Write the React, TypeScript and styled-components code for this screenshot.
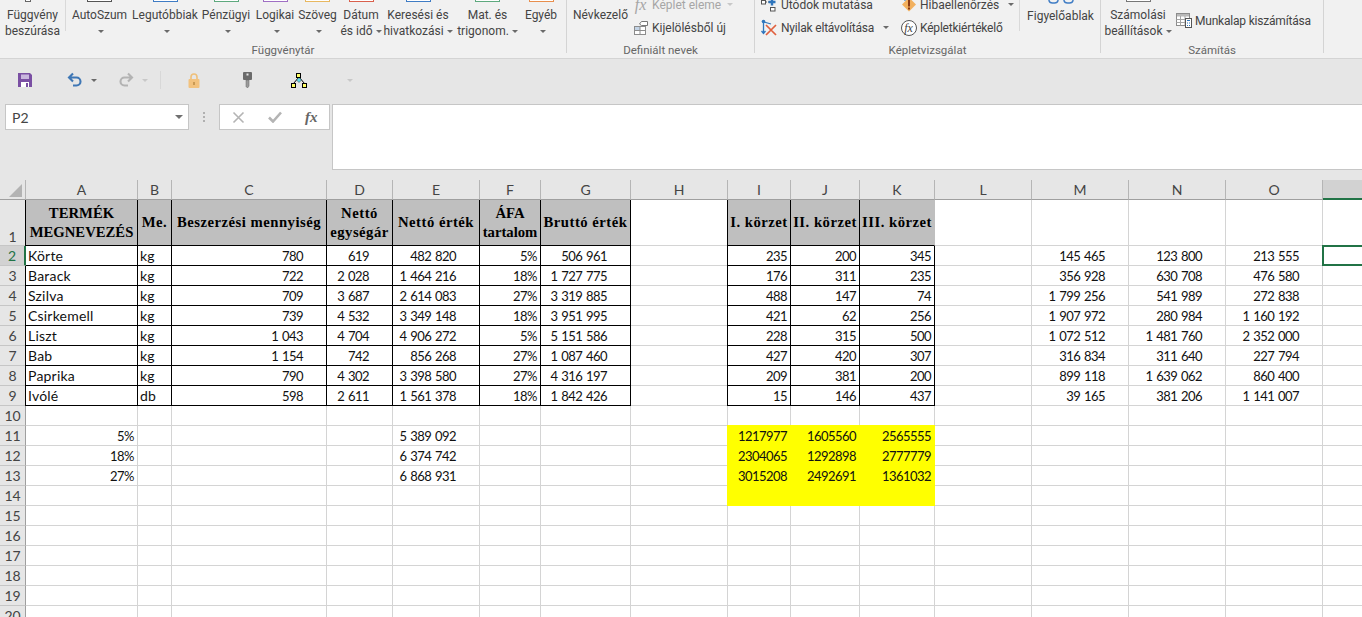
import React from "react";
import styled, { createGlobalStyle } from "styled-components";

const GlobalStyle = createGlobalStyle`
    html, body {
        margin: 0;
        padding: 0;
        width: 1362px;
        height: 617px;
        overflow: hidden;
        background: #e6e6e6;
    }
    * {
        box-sizing: border-box;
    }
`;

const Page = styled.div`
    width: 1362px;
    height: 617px;
    overflow: hidden;
    font-family: Roboto, "Liberation Sans", sans-serif;
    color: #444;
`;

/* ribbon */

const Ribbon = styled.div`
    display: flex;
    height: 59px;
    background: #f1f1f1;
    border-bottom: 1px solid #d4d4d4;
    font-size: 12px;
    overflow: hidden;
`;

const Group = styled.div<{ $width: number }>`
    display: flex;
    flex-direction: column;
    width: ${(p) => p.$width}px;
    height: 53px;
    border-right: 1px solid #d4d4d4;
`;

const GroupBody = styled.div`
    display: flex;
    align-items: flex-start;
    height: 42px;
`;

const GroupLabel = styled.div`
    height: 11px;
    line-height: 16px;
    text-align: center;
    font-size: 11.5px;
    color: #666;
`;

const Divider = styled.div`
    flex: none;
    width: 1px;
    height: 31px;
    background: #d9d9d9;
`;

const BigButton = styled.div<{ $width: number }>`
    flex: none;
    display: flex;
    flex-direction: column;
    align-items: center;
    width: ${(p) => p.$width}px;
    white-space: nowrap;
`;

const Strip = styled.div<{ $color?: string; $width?: number; $shift?: number }>`
    width: ${(p) => p.$width ?? 25}px;
    height: 2px;
    margin-right: ${(p) => p.$shift ?? 0}px;
    margin-bottom: 5px;
    background: #fff;
    border: 1px solid ${(p) => p.$color ?? "transparent"};
    border-top: none;
`;

const ButtonLine = styled.div`
    height: 16px;
    line-height: 16px;
`;

const WatchLabel = styled(ButtonLine)`
    margin-top: 4px;
`;

const Caret = styled.span<{ $faint?: boolean; $gap?: number }>`
    display: inline-block;
    width: 0;
    height: 0;
    margin-left: ${(p) => p.$gap ?? 3}px;
    vertical-align: middle;
    border-left: 3px solid transparent;
    border-right: 3px solid transparent;
    border-top: 3px solid ${(p) => (p.$faint ? "#c8c8c8" : "#6a6a6a")};
`;

const SmallStack = styled.div<{ $left: number; $width: number }>`
    flex: none;
    width: ${(p) => p.$width}px;
    margin-left: ${(p) => p.$left}px;
    margin-top: -7px;
`;

const SmallRow = styled.div<{ $disabled?: boolean; $top?: number; $tight?: boolean }>`
    display: flex;
    align-items: center;
    gap: 3px;
    height: 23px;
    white-space: nowrap;
    flex: none;
    margin-top: ${(p) => p.$top ?? 0}px;
    letter-spacing: ${(p) => (p.$tight ? "-0.2px" : "normal")};
    color: ${(p) => (p.$disabled ? "#a6a6a6" : "#444")};
`;

const SmallIcon = styled.span`
    flex: none;
    display: flex;
    align-items: center;
    justify-content: center;
    width: 17px;
    height: 17px;
`;

const FxGlyph = styled.span<{ $size?: number; $color?: string }>`
    font-family: "Liberation Serif", serif;
    font-style: italic;
    font-size: ${(p) => p.$size ?? 15}px;
    line-height: 1;
    color: ${(p) => p.$color ?? "#666"};
`;

const FxBold = styled(FxGlyph)`
    font-weight: bold;
`;

const FxCircle = styled.span`
    display: flex;
    align-items: center;
    justify-content: center;
    width: 16px;
    height: 16px;
    border: 1px solid #555;
    border-radius: 50%;
    background: #fff;
`;

const NameButton = styled.div`
    flex: none;
    width: 59px;
    margin-left: 6px;
    padding-top: 7px;
    line-height: 16px;
    white-space: nowrap;
`;

/* quick access toolbar */

const QuickBar = styled.div`
    display: flex;
    align-items: center;
    height: 45px;
    padding-bottom: 3px;
    background: #e6e6e6;
`;

const QuickItem = styled.div<{ $left: number }>`
    flex: none;
    display: flex;
    align-items: center;
    margin-left: ${(p) => p.$left}px;
`;

const QuickDivider = styled.div`
    width: 1px;
    height: 18px;
    background: #d8d8d8;
`;

/* formula bar */

const FormulaRow = styled.div`
    display: flex;
    align-items: flex-start;
    height: 76px;
    padding-left: 5px;
    background: #e6e6e6;
`;

const NameBox = styled.div`
    display: flex;
    align-items: center;
    justify-content: space-between;
    width: 184px;
    height: 26px;
    padding: 0 5px 0 6px;
    background: #fff;
    border: 1px solid #c6c6c6;
    font-family: Lato, sans-serif;
    font-size: 14px;
`;

const NameCaret = styled.span`
    border-left: 4px solid transparent;
    border-right: 4px solid transparent;
    border-top: 4px solid #707070;
`;

const Grip = styled.div`
    display: flex;
    flex-direction: column;
    align-items: center;
    justify-content: center;
    gap: 2px;
    width: 30px;
    height: 26px;
`;

const GripDot = styled.span`
    width: 2px;
    height: 2px;
    background: #b0b0b0;
`;

const FxBox = styled.div`
    display: flex;
    align-items: center;
    width: 111px;
    height: 26px;
    padding-left: 12px;
    gap: 23px;
    background: #fff;
    border: 1px solid #c6c6c6;
`;

const FormulaInput = styled.div`
    flex: 1;
    height: 66px;
    margin-left: 2px;
    background: #fff;
    border: 1px solid #c6c6c6;
    border-right: none;
`;

/* sheet */

const columnWidths = [26, 112, 34, 155, 66, 87, 61, 90, 97, 63, 69, 75, 97, 97, 97, 97, 97];
const columnLetters = "ABCDEFGHIJKLMNOP".split("");

const Sheet = styled.div`
    display: grid;
    grid-template-columns: ${columnWidths.map((w) => `${w}px`).join(" ")};
    grid-template-rows: 20px 46px repeat(19, 20px);
    background: #fff;
    font-family: Lato, sans-serif;
    font-size: 14px;
    color: #111;
`;

const Corner = styled.div`
    display: flex;
    align-items: flex-end;
    justify-content: flex-end;
    padding: 0 3px 2px 0;
    background: #e6e6e6;
    border-right: 1px solid #b5b5b5;
    border-bottom: 1px solid #9f9f9f;
`;

const ColumnHeader = styled.div<{ $active?: boolean }>`
    display: flex;
    align-items: center;
    justify-content: center;
    background: ${(p) => (p.$active ? "#d2d2d2" : "#e6e6e6")};
    border-right: 1px solid #b5b5b5;
    border-bottom: ${(p) => (p.$active ? "2px solid #217346" : "1px solid #9f9f9f")};
    color: #444;
`;

const RowHeader = styled.div<{ $active?: boolean; $tall?: boolean }>`
    display: flex;
    align-items: ${(p) => (p.$tall ? "flex-end" : "center")};
    justify-content: center;
    background: ${(p) => (p.$active ? "#d2d2d2" : "#e6e6e6")};
    border-right: ${(p) => (p.$active ? "2px solid #217346" : "1px solid #9f9f9f")};
    border-bottom: 1px solid #c6c6c6;
    color: ${(p) => (p.$active ? "#217346" : "#444")};
`;

const Cell = styled.div<{
    $black?: boolean;
    $fill?: string;
    $borderTone?: string;
    $edge?: string;
    $pad?: number;
    $selected?: boolean;
}>`
    position: relative;
    display: flex;
    align-items: center;
    justify-content: ${(p) => (p.$pad !== undefined ? "flex-end" : "flex-start")};
    padding: 0 ${(p) => p.$pad ?? 0}px 0 2px;
    white-space: nowrap;
    background: ${(p) => p.$fill ?? "#fff"};
    border-right: 1px solid ${(p) => p.$borderTone ?? (p.$black ? "#000" : "#d4d4d4")};
    border-bottom: 1px solid ${(p) => (p.$black ? "#000" : p.$borderTone ?? "#d4d4d4")};
    box-shadow: ${(p) => p.$edge ?? "none"};
    ${(p) =>
        p.$pad !== undefined
            ? `font-size: 13px; letter-spacing: -0.54px; word-spacing: 1px;`
            : `letter-spacing: 0.2px;`}

    ${(p) =>
        p.$selected
            ? `&::after {
                content: "";
                position: absolute;
                top: -1px;
                left: -1px;
                right: -1px;
                bottom: -1px;
                border: 2px solid #217346;
            }`
            : ""}
`;

const HeadCell = styled(Cell)`
    justify-content: center;
    padding: 0;
    text-align: center;
    font-family: "Liberation Serif", serif;
    font-weight: bold;
    font-size: 14.7px;
    line-height: 19px;
    color: #000;
    background: #bfbfbf;
`;

const HeadLine = styled.div<{ $tight?: boolean }>`
    letter-spacing: ${(p) => (p.$tight ? 0 : 0.5)}px;
`;

/* icons */

const SaveIcon = () => (
    <svg width="16" height="16" viewBox="0 0 16 16">
        <path fill="#7a4fa3" d="M1 1h12l2 2v12H1z" />
        <rect x="4" y="2.5" width="8" height="4.5" fill="#c9b6de" />
        <rect x="4" y="10" width="8" height="5" fill="#fff" />
        <rect x="9" y="11" width="2" height="4" fill="#7a4fa3" />
    </svg>
);

const TurnIcon = ({ color, flip }: { color: string; flip?: boolean }) => (
    <svg width="16" height="16" viewBox="0 0 16 16" style={flip ? { transform: "scaleX(-1)" } : undefined}>
        <path
            d="M6 1.5 2 5.5l4 4M2 5.5h7.5a4 4 0 0 1 0 8H6"
            fill="none"
            stroke={color}
            strokeWidth="2.1"
        />
    </svg>
);

const LockIcon = () => (
    <svg width="12" height="15" viewBox="0 0 12 15">
        <path d="M3 7V4a3 3 0 0 1 6 0v3" fill="none" stroke="#efc07a" strokeWidth="1.6" />
        <rect x="0.5" y="6" width="11" height="9" rx="1" fill="#f2c27e" />
        <rect x="5" y="9" width="2" height="3" fill="#c99a55" />
    </svg>
);

const KeyIcon = () => (
    <svg width="9" height="16" viewBox="0 0 9 16">
        <rect x="0" y="0" width="9" height="8" rx="1" fill="#6b6b6b" />
        <rect x="3.5" y="1.5" width="2" height="2" fill="#e6e6e6" />
        <path d="M3 8h3v6l-1.5 2L3 14.5z" fill="#9a9a9a" stroke="#666" strokeWidth="0.5" />
    </svg>
);

const TreeIcon = () => (
    <svg width="16" height="15" viewBox="0 0 16 15">
        <path d="M8 4 2.5 10.5M8 4l5.5 6.5" stroke="#000" strokeWidth="1" fill="none" />
        <path d="M8 4.5 10.5 7 8 9.5 5.5 7z" fill="#5fd8ec" stroke="#333" strokeWidth="0.5" />
        <rect x="5.5" y="0.5" width="4" height="4" fill="#ffff66" stroke="#000" />
        <rect x="0.5" y="10.5" width="4" height="4" fill="#ffff66" stroke="#000" />
        <rect x="11.5" y="10.5" width="4" height="4" fill="#ffff66" stroke="#000" />
    </svg>
);

const CrossIcon = () => (
    <svg width="13" height="13" viewBox="0 0 13 13">
        <path d="M1.5 1.5l10 10M11.5 1.5l-10 10" stroke="#b4b4b4" strokeWidth="1.6" />
    </svg>
);

const CheckIcon = () => (
    <svg width="14" height="12" viewBox="0 0 14 12">
        <path d="M1 6.5 5 10.5 13 1.5" fill="none" stroke="#b4b4b4" strokeWidth="2.6" />
    </svg>
);

const SelectionIcon = () => (
    <svg width="16" height="16" viewBox="0 0 16 16">
        <rect x="1.5" y="6.5" width="11" height="8" fill="#fff" stroke="#8c8c8c" />
        <rect x="2" y="7" width="5" height="3" fill="#c2d3e6" />
        <path d="M1.5 10.5h11M7 6.5v8" stroke="#8c8c8c" />
        <path d="M6.5 4 8.5 1.5h6v4h-6z" fill="#fff" stroke="#777" />
    </svg>
);

const TraceIcon = () => (
    <svg width="17" height="17" viewBox="0 0 17 17">
        <rect x="0.5" y="4.5" width="4" height="3.5" fill="#fff" stroke="#555" />
        <path d="M5 6h3" stroke="#555" strokeDasharray="1 1" />
        <path d="M11 2.5v7M7.5 6h7" stroke="#2f76bd" strokeWidth="2.4" />
        <rect x="9.5" y="11.5" width="4.5" height="3.5" fill="#fff" stroke="#555" />
    </svg>
);

const RemoveArrowsIcon = () => (
    <svg width="17" height="17" viewBox="0 0 17 17">
        <circle cx="2.5" cy="2.5" r="1.8" fill="#2f76bd" />
        <path d="M2.5 3v11M.5 12l2 2.5 2-2.5M3 3l7 2" fill="none" stroke="#2f76bd" strokeWidth="1.3" />
        <path d="M5 6l10 10M15 6 5 16" stroke="#e0603e" strokeWidth="1.7" />
    </svg>
);

const ErrorCheckIcon = () => (
    <svg width="17" height="17" viewBox="0 0 17 17">
        <path d="M2.5 2.5 5 0l2.5 2.5L5 5z" fill="#2f76bd" />
        <path d="M9 1.5 16 8.5 9 15.5 2 8.5z" fill="#f2b15f" />
        <rect x="8" y="4" width="2" height="6.5" fill="#8a3a14" />
        <rect x="8" y="11.5" width="2" height="2" fill="#8a3a14" />
    </svg>
);

const GlassesIcon = () => (
    <svg width="26" height="4" viewBox="0 0 26 4">
        <path
            d="M1 0v.5a3.5 3 0 0 0 3.5 2.5h2a3.5 3 0 0 0 3.5-2.5V0M16 0v.5a3.5 3 0 0 0 3.5 2.5h2a3.5 3 0 0 0 3.5-2.5V0"
            fill="none"
            stroke="#3f7cc4"
            strokeWidth="1.4"
        />
    </svg>
);

const WorksheetIcon = () => (
    <svg width="16" height="15" viewBox="0 0 16 15">
        <rect x="0.5" y="0.5" width="13" height="12" fill="#fff" stroke="#8c8c8c" />
        <rect x="1" y="1" width="12" height="2.5" fill="#b9b9b9" />
        <path d="M.5 6.5h13M.5 9.5h13M4.5 3v9.5M9 3v9.5" stroke="#a6a6a6" />
        <rect x="9.5" y="5.5" width="6" height="9" fill="#fff" stroke="#555" />
        <path d="M11 7.5h3M11 10h1M13 10h1M11 12.5h1M13 12.5h1" stroke="#2f76bd" />
    </svg>
);

const CornerIcon = () => (
    <svg width="13" height="13" viewBox="0 0 13 13">
        <path d="M13 0v13H0z" fill="#b3b3b3" />
    </svg>
);

/* data */

const functionButtons = [
    { width: 67, color: "#555555", lines: ["AutoSzum", ""] },
    { width: 64, color: "#3f7cc4", lines: ["Legutóbbiak", ""] },
    { width: 58, color: "#5ea97e", lines: ["Pénzügyi", ""] },
    { width: 40, color: "#9f6fc4", lines: ["Logikai", ""] },
    { width: 45, color: "#e8b860", lines: ["Szöveg", ""] },
    { width: 42, color: "#d9604c", lines: ["Dátum", "és idő"] },
    { width: 72, color: "#3f7cc4", lines: ["Keresési és", "hivatkozási"] },
    { width: 67, color: "#5ea97e", lines: ["Mat. és", "trigonom."] },
    { width: 40, color: "#e88f4e", lines: ["Egyéb", ""] },
];

const nb = (s: string) => s.replace(/ /g, "\u00a0");

const tableRows = [
    ["Körte", "kg", "780", "619", "482 820", "5%", "506 961", "", "235", "200", "345", "", "145 465", "123 800", "213 555"],
    ["Barack", "kg", "722", "2 028", "1 464 216", "18%", "1 727 775", "", "176", "311", "235", "", "356 928", "630 708", "476 580"],
    ["Szilva", "kg", "709", "3 687", "2 614 083", "27%", "3 319 885", "", "488", "147", "74", "", "1 799 256", "541 989", "272 838"],
    ["Csirkemell", "kg", "739", "4 532", "3 349 148", "18%", "3 951 995", "", "421", "62", "256", "", "1 907 972", "280 984", "1 160 192"],
    ["Liszt", "kg", "1 043", "4 704", "4 906 272", "5%", "5 151 586", "", "228", "315", "500", "", "1 072 512", "1 481 760", "2 352 000"],
    ["Bab", "kg", "1 154", "742", "856 268", "27%", "1 087 460", "", "427", "420", "307", "", "316 834", "311 640", "227 794"],
    ["Paprika", "kg", "790", "4 302", "3 398 580", "27%", "4 316 197", "", "209", "381", "200", "", "899 118", "1 639 062", "860 400"],
    ["Ivólé", "db", "598", "2 611", "1 561 378", "18%", "1 842 426", "", "15", "146", "437", "", "39 165", "381 206", "1 141 007"],
];

const summaryRows: Record<number, string[]> = {
    11: ["5%", "", "", "", "5 389 092", "", "", "", "1217977", "1605560", "2565555"],
    12: ["18%", "", "", "", "6 374 742", "", "", "", "2304065", "1292898", "2777779"],
    13: ["27%", "", "", "", "6 868 931", "", "", "", "3015208", "2492691", "1361032"],
};

const headings: Record<number, string[]> = {
    0: ["TERMÉK", "MEGNEVEZÉS"],
    1: ["Me."],
    2: ["Beszerzési mennyiség"],
    3: ["Nettó", "egységár"],
    4: ["Nettó érték"],
    5: ["ÁFA", "tartalom"],
    6: ["Bruttó érték"],
    8: ["I. körzet"],
    9: ["II. körzet"],
    10: ["III. körzet"],
};

const tightHeadings = ["TERMÉK", "MEGNEVEZÉS", "ÁFA", "tartalom"];

// right padding of numeric columns; accounting format leaves a wide gap
const rightPad: Record<number, number> = {
    2: 23, 3: 23, 4: 23, 5: 3, 6: 23, 8: 3, 9: 3, 10: 3, 12: 23, 13: 23, 14: 23,
};

const padFor = (r: number, c: number) => (c === 0 ? (r >= 11 ? 3 : undefined) : rightPad[c]);

const inTable = (c: number) => (c >= 0 && c <= 6) || (c >= 8 && c <= 10);
const inYellow = (r: number, c: number) => r >= 11 && r <= 14 && c >= 8 && c <= 10;

const edgeFor = (r: number, c: number) => {
    if (r <= 9 && (c === 8 || (c === 0 && r !== 2))) return "-1px 0 0 #000";
    if (inYellow(r, c)) {
        const parts = [];
        if (c === 8) parts.push("-1px 0 0 #ff0");
        if (r === 11) parts.push("0 -1px 0 #ff0", "-1px -1px 0 #ff0");
        return parts.length ? parts.join(", ") : undefined;
    }
    return undefined;
};

const renderRow = (r: number) => {
    const values = r >= 2 && r <= 9 ? tableRows[r - 2] : summaryRows[r] ?? [];
    return columnLetters.map((letter, c) => {
        const key = `${letter}${r}`;
        if (r === 1 && inTable(c)) {
            return (
                <HeadCell key={key} $black $edge={edgeFor(r, c)} $borderTone={c === 10 ? "#bfbfbf" : undefined}>
                    <div>
                        {headings[c].map((line) => (
                            <HeadLine key={line} $tight={tightHeadings.includes(line)}>
                                {line}
                            </HeadLine>
                        ))}
                    </div>
                </HeadCell>
            );
        }
        const value = values[c] ?? "";
        const yellow = inYellow(r, c);
        return (
            <Cell
                key={key}
                $black={r >= 2 && r <= 9 && inTable(c)}
                $fill={yellow ? "#ffff00" : undefined}
                $borderTone={yellow ? "#ffff00" : undefined}
                $edge={edgeFor(r, c)}
                $pad={value ? padFor(r, c) : undefined}
                $selected={r === 2 && letter === "P"}
            >
                {nb(value)}
            </Cell>
        );
    });
};

const rowNumbers = Array.from({ length: 20 }, (_, i) => i + 1);

export default function App() {
    return (
        <Page>
            <GlobalStyle />
            <Ribbon>
                <Group $width={567}>
                    <GroupBody>
                        <BigButton $width={65}>
                            <Strip $color="#666" $width={6} $shift={10} />
                            <ButtonLine>Függvény</ButtonLine>
                            <ButtonLine>beszúrása</ButtonLine>
                        </BigButton>
                        <Divider />
                        {functionButtons.map((b) => (
                            <BigButton key={b.lines[0]} $width={b.width}>
                                <Strip $color={b.color} />
                                <ButtonLine>{b.lines[0]}</ButtonLine>
                                <ButtonLine>
                                    {b.lines[1]}
                                    <Caret />
                                </ButtonLine>
                            </BigButton>
                        ))}
                    </GroupBody>
                    <GroupLabel>Függvénytár</GroupLabel>
                </Group>

                <Group $width={188}>
                    <GroupBody>
                        <NameButton>Névkezelő</NameButton>
                        <SmallStack $left={0} $width={120}>
                            <SmallRow $disabled>
                                <SmallIcon>
                                    <FxGlyph $color="#a6a6a6" $size={16}>fx</FxGlyph>
                                </SmallIcon>
                                Képlet eleme
                                <Caret $faint />
                            </SmallRow>
                            <SmallRow>
                                <SmallIcon>
                                    <SelectionIcon />
                                </SmallIcon>
                                Kijelölésből új
                            </SmallRow>
                        </SmallStack>
                    </GroupBody>
                    <GroupLabel>Definiált nevek</GroupLabel>
                </Group>

                <Group $width={346}>
                    <GroupBody>
                        <SmallStack $left={6} $width={139}>
                            <SmallRow>
                                <SmallIcon>
                                    <TraceIcon />
                                </SmallIcon>
                                Utódok mutatása
                            </SmallRow>
                            <SmallRow $tight>
                                <SmallIcon>
                                    <RemoveArrowsIcon />
                                </SmallIcon>
                                Nyilak eltávolítása
                                <Caret $gap={6} />
                            </SmallRow>
                        </SmallStack>
                        <SmallStack $left={0} $width={119}>
                            <SmallRow>
                                <SmallIcon>
                                    <ErrorCheckIcon />
                                </SmallIcon>
                                Hibaellenőrzés
                                <Caret $gap={6} />
                            </SmallRow>
                            <SmallRow $tight>
                                <SmallIcon>
                                    <FxCircle>
                                        <FxGlyph $size={12} $color="#444">fx</FxGlyph>
                                    </FxCircle>
                                </SmallIcon>
                                Képletkiértékelő
                            </SmallRow>
                        </SmallStack>
                        <Divider />
                        <BigButton $width={81}>
                            <GlassesIcon />
                            <WatchLabel>Figyelőablak</WatchLabel>
                        </BigButton>
                    </GroupBody>
                    <GroupLabel>Képletvizsgálat</GroupLabel>
                </Group>

                <Group $width={223}>
                    <GroupBody>
                        <BigButton $width={74}>
                            <Strip $color="#777" />
                            <ButtonLine>Számolási</ButtonLine>
                            <ButtonLine>
                                beállítások
                                <Caret />
                            </ButtonLine>
                        </BigButton>
                        <SmallRow $top={9} $tight>
                            <SmallIcon>
                                <WorksheetIcon />
                            </SmallIcon>
                            Munkalap kiszámítása
                        </SmallRow>
                    </GroupBody>
                    <GroupLabel>Számítás</GroupLabel>
                </Group>
            </Ribbon>

            <QuickBar>
                <QuickItem $left={17}><SaveIcon /></QuickItem>
                <QuickItem $left={34}><TurnIcon color="#3f77b5" /></QuickItem>
                <QuickItem $left={5}><Caret /></QuickItem>
                <QuickItem $left={21}><TurnIcon color="#b3b3b3" flip /></QuickItem>
                <QuickItem $left={5}><Caret $faint /></QuickItem>
                <QuickItem $left={12}><QuickDivider /></QuickItem>
                <QuickItem $left={27}><LockIcon /></QuickItem>
                <QuickItem $left={43}><KeyIcon /></QuickItem>
                <QuickItem $left={39}><TreeIcon /></QuickItem>
                <QuickItem $left={37}><Caret $faint /></QuickItem>
            </QuickBar>

            <FormulaRow>
                <NameBox>
                    P2
                    <NameCaret />
                </NameBox>
                <Grip>
                    <GripDot />
                    <GripDot />
                    <GripDot />
                </Grip>
                <FxBox>
                    <CrossIcon />
                    <CheckIcon />
                    <FxBold $size={15}>fx</FxBold>
                </FxBox>
                <FormulaInput />
            </FormulaRow>

            <Sheet>
                <Corner>
                    <CornerIcon />
                </Corner>
                {columnLetters.map((letter) => (
                    <ColumnHeader key={letter} $active={letter === "P"}>
                        {letter === "P" ? "" : letter}
                    </ColumnHeader>
                ))}
                {rowNumbers.map((r) => (
                    <React.Fragment key={r}>
                        <RowHeader $active={r === 2} $tall={r === 1}>
                            {r}
                        </RowHeader>
                        {renderRow(r)}
                    </React.Fragment>
                ))}
            </Sheet>
        </Page>
    );
}
